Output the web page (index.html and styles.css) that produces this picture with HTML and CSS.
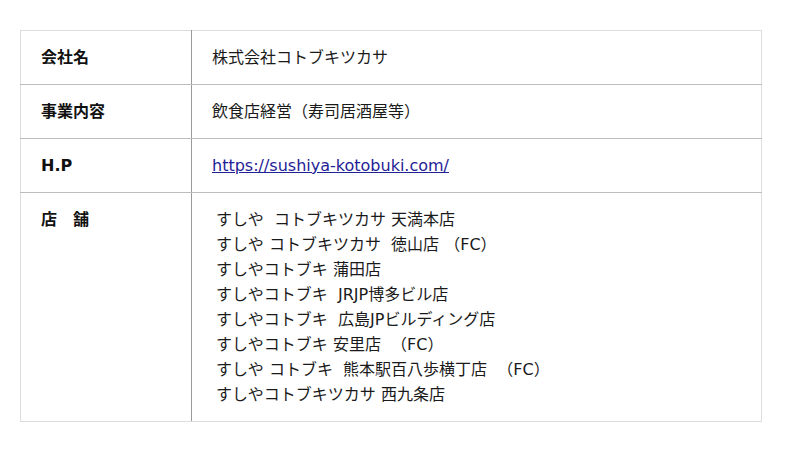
FILE: index.html
```html
<!DOCTYPE html>
<html lang="ja">
<head>
<meta charset="utf-8">
<link rel="stylesheet" href="styles.css">
</head>
<body>
<div class="wrap">
<table class="info">
  <tr>
    <th>会社名</th>
    <td>株式会社コトブキツカサ</td>
  </tr>
  <tr>
    <th>事業内容</th>
    <td>飲食店経営（寿司居酒屋等）</td>
  </tr>
  <tr>
    <th>H.P</th>
    <td><a href="#">https://sushiya-kotobuki.com/</a></td>
  </tr>
  <tr>
    <th>店　舗</th>
    <td>
      <div class="stores">
        <div class="store">すしや  コトブキツカサ 天満本店</div>
        <div class="store">すしや コトブキツカサ  徳山店 （FC）</div>
        <div class="store">すしやコトブキ 蒲田店</div>
        <div class="store">すしやコトブキ  JRJP博多ビル店</div>
        <div class="store">すしやコトブキ  広島JPビルディング店</div>
        <div class="store">すしやコトブキ 安里店  （FC）</div>
        <div class="store">すしや コトブキ  熊本駅百八歩横丁店  （FC）</div>
        <div class="store">すしやコトブキツカサ 西九条店</div>
      </div>
    </td>
  </tr>
</table>
</div>
</body>
</html>
```

FILE: styles.css
```css
html, body {
  margin: 0;
  padding: 0;
  background: #ffffff;
}
body {
  font-family: "DejaVu Sans", "Noto Sans CJK JP", sans-serif;
  font-size: 16px;
  color: #1a1a1a;
}
.wrap {
  padding: 30px 38px 0 20px;
}
.info {
  width: 742px;
  border-collapse: collapse;
  border: 1px solid #dcdcdc;
}
.info th,
.info td {
  padding: 14px 20px;
  line-height: 25px;
  vertical-align: top;
  text-align: left;
  border-bottom: 1px solid #bdbdbd;
}
.info tr:last-child th,
.info tr:last-child td {
  border-bottom: 1px solid #dcdcdc;
}
.info th {
  width: 130px;
  font-weight: bold;
  color: #111111;
  border-right: 1px solid #9a9a9a;
}
.info td {
  font-weight: normal;
  color: #1a1a1a;
}
.info a {
  color: #1f2296;
  text-decoration: underline;
}
.stores {
  padding-left: 4px;
}
.store {
  white-space: pre;
}
```
